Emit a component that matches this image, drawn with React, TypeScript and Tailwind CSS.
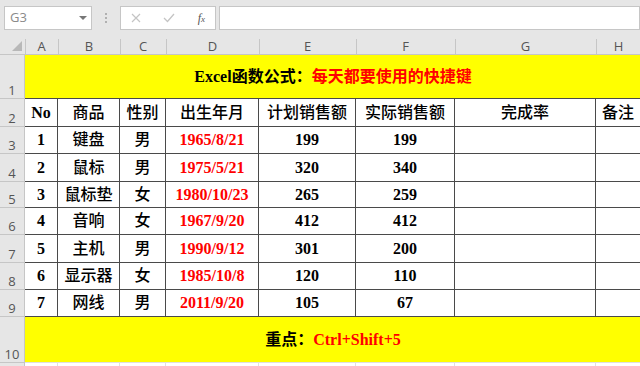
import React from 'react';

const cols = ['A', 'B', 'C', 'D', 'E', 'F', 'G', 'H'];

const rows = [
  { no: '1', item: '键盘', sex: '男', date: '1965/8/21', plan: '199', real: '199' },
  { no: '2', item: '鼠标', sex: '男', date: '1975/5/21', plan: '320', real: '340' },
  { no: '3', item: '鼠标垫', sex: '女', date: '1980/10/23', plan: '265', real: '259' },
  { no: '4', item: '音响', sex: '女', date: '1967/9/20', plan: '412', real: '412' },
  { no: '5', item: '主机', sex: '男', date: '1990/9/12', plan: '301', real: '200' },
  { no: '6', item: '显示器', sex: '女', date: '1985/10/8', plan: '120', real: '110' },
  { no: '7', item: '网线', sex: '男', date: '2011/9/20', plan: '105', real: '67' }
];

const rowHeights = ['h-[27px]', 'h-[28px]', 'h-[26px]', 'h-[27px]', 'h-[28px]', 'h-[27px]', 'h-[27px]'];

const serif = "font-['Liberation_Serif','Noto_Sans_CJK_SC',serif]";
const cell = 'flex items-center justify-center border-r border-b border-[#4a4a4a] bg-white';

function RowHead({ n, h }: { n: string; h: string }) {
  return (
    <div
      className={`${h} flex items-end justify-center pb-[1px] bg-[#e6e6e6] border-b border-r border-[#c6c6c6] text-[13px] leading-none text-[#555] font-['Open_Sans',sans-serif]`}
    >
      {n}
    </div>
  );
}

export default function App() {
  return (
    <div className="w-[640px] h-[366px] overflow-hidden bg-[#e6e6e6] select-none">
      {/* formula bar */}
      <div className="h-[38px] flex items-start pt-[6px] pl-[4px]">
        <div className="w-[88px] h-[24px] bg-white border border-[#c6c6c6] flex items-center justify-between pl-[5px] pr-[4px]">
          <span className="text-[13px] text-[#8a8a8a] font-['Open_Sans',sans-serif]">G3</span>
          <svg width="8" height="5" viewBox="0 0 8 5">
            <path d="M0 0 L8 0 L4 4 Z" fill="#777" />
          </svg>
        </div>
        <div className="w-[28px] h-[24px] flex flex-col items-center justify-center gap-[2px]">
          <span className="w-[2px] h-[2px] bg-[#b0b0b0]" />
          <span className="w-[2px] h-[2px] bg-[#b0b0b0]" />
          <span className="w-[2px] h-[2px] bg-[#b0b0b0]" />
        </div>
        <div className="w-[96px] h-[24px] bg-white border border-[#c6c6c6] flex items-center justify-between px-[10px]">
          <svg width="10" height="10" viewBox="0 0 10 10">
            <path d="M1 1 L9 9 M9 1 L1 9" stroke="#c4c4c4" strokeWidth="1.2" />
          </svg>
          <svg width="12" height="10" viewBox="0 0 12 10">
            <path d="M1 5 L4.5 8.5 L11 1" stroke="#c4c4c4" strokeWidth="1.3" fill="none" />
          </svg>
          <span className="text-[12px] italic text-[#555] font-['Liberation_Serif',serif]">
            f<span className="text-[9px]">x</span>
          </span>
        </div>
        <div className="ml-[3px] flex-1 h-[24px] bg-white border border-[#c6c6c6]" />
      </div>

      <div className="grid grid-cols-[25px_33px_62px_46px_93px_97px_99px_141px_45px]">
        {/* column headers */}
        <div className="h-[17px] relative border-b border-[#c6c6c6]">
          <svg className="absolute right-[3px] bottom-[3px]" width="10" height="10" viewBox="0 0 10 10">
            <path d="M10 0 L10 10 L0 10 Z" fill="#b8b8b8" />
          </svg>
        </div>
        {cols.map((c) => (
          <div
            key={c}
            className="h-[17px] flex items-end justify-center border-b border-[#c6c6c6] relative text-[13px] leading-none text-[#555] font-['Open_Sans',sans-serif] pb-[1px]"
          >
            <span className="absolute left-0 bottom-0 h-[15px] w-px bg-[#c6c6c6]" />
            {c}
          </div>
        ))}

        {/* row 1 */}
        <RowHead n="1" h="h-[44px]" />
        <div
          className={`col-span-8 h-[44px] bg-[#ffff00] border-b border-[#4a4a4a] flex items-center justify-center text-[16px] font-bold ${serif}`}
        >
          <span className="text-black">Excel函数公式：</span>
          <span className="text-[#ff0000]">每天都要使用的快捷键</span>
        </div>

        {/* row 2 header */}
        <RowHead n="2" h="h-[28px]" />
        <div className={`${cell} h-[28px] text-[16px] font-bold ${serif}`}>No</div>
        {['商品', '性别', '出生年月', '计划销售额', '实际销售额', '完成率', '备注'].map((t) => (
          <div key={t} className={`${cell} h-[28px] text-[16px] font-medium ${serif}`}>
            {t}
          </div>
        ))}

        {rows.map((r, i) => (
          <React.Fragment key={r.no}>
            <RowHead n={String(i + 3)} h={rowHeights[i]} />
            <div className={`${cell} ${rowHeights[i]} text-[16px] font-bold ${serif}`}>{r.no}</div>
            <div className={`${cell} ${rowHeights[i]} text-[16px] font-medium ${serif}`}>{r.item}</div>
            <div className={`${cell} ${rowHeights[i]} text-[16px] font-medium ${serif}`}>{r.sex}</div>
            <div className={`${cell} ${rowHeights[i]} text-[16px] font-bold text-[#ff0000] ${serif}`}>{r.date}</div>
            <div className={`${cell} ${rowHeights[i]} text-[16px] font-bold ${serif}`}>{r.plan}</div>
            <div className={`${cell} ${rowHeights[i]} text-[16px] font-bold ${serif}`}>{r.real}</div>
            <div className={`${cell} ${rowHeights[i]}`} />
            <div className={`${cell} ${rowHeights[i]}`} />
          </React.Fragment>
        ))}

        {/* row 10 */}
        <RowHead n="10" h="h-[46px]" />
        <div
          className={`col-span-8 h-[46px] bg-[#ffff00] border-b border-[#e0e0e0] flex items-center justify-center text-[16px] font-bold ${serif}`}
        >
          <span className="text-black">重点：</span>
          <span className="text-[#ff0000]">Ctrl+Shift+5</span>
        </div>

        {/* row 11 */}
        <div className="h-[20px] bg-[#e6e6e6] border-r border-[#c6c6c6]" />
        {cols.map((c) => (
          <div key={c} className="h-[20px] bg-white border-r border-[#e0e0e0]" />
        ))}
      </div>
    </div>
  );
}
